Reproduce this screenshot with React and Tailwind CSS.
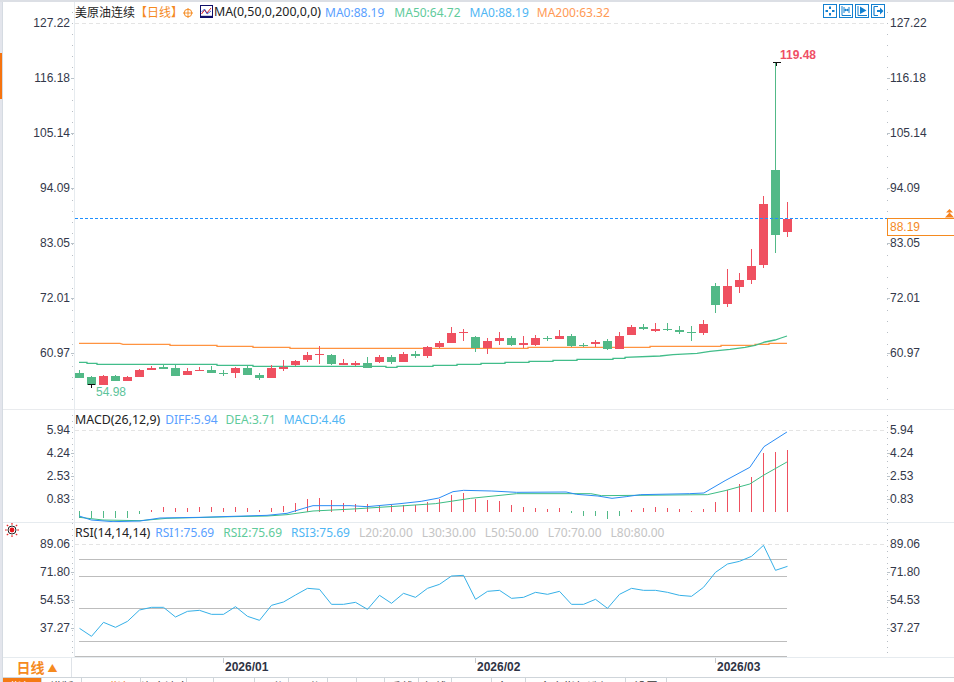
import React from "react";

const GREEN = "#52b987";
const RED = "#ef5060";
// [color, high, bodyTop, bodyBottom, low] in screen pixels, one candle every 12px
const candles = [
  ["g",370,373,378,378],["g",376,377,385,385],["r",375,376,385,385],["g",375,376,381,381],["r",376,377,381,381],
  ["r",369,370,377,377],["r",366,368,370,370],["g",364,367,369,369],["g",365,368,376,376],["r",368,371,375,375],
  ["r",367,370,371,371],["g",366,370,373,373],["g",370,373,374,376],["r",367,368,373,378],["g",366,368,375,375],
  ["g",373,375,378,380],["r",365,368,378,378],["r",360,367,369,371],["r",360,361,365,366],["r",352,355,360,362],
  ["r",346,354,355,364],["g",354,355,364,365],["r",359,363,365,365],["r",361,363,365,366],["g",357,363,368,368],
  ["r",355,357,362,363],["g",355,357,362,364],["r",352,354,362,362],["g",351,354,356,358],["r",346,347,356,358],
  ["r",341,343,347,348],["r",327,333,343,343],["r",329,332,333,341],["g",336,337,348,352],["r",338,341,348,354],
  ["r",332,338,341,345],["g",336,338,345,346],["r",336,343,345,348],["r",335,338,345,346],["g",336,338,339,341],
  ["r",330,336,339,339],["g",334,336,346,347],["g",343,345,346,347],["r",340,342,344,347],["g",339,341,349,350],
  ["r",332,336,349,349],["r",325,327,335,335],["g",324,327,329,330],["r",323,329,331,332],["g",323,329,330,331],
  ["g",326,330,332,334],["g",326,332,333,341],["r",320,324,333,335],["g",283,286,305,313],["r",269,286,304,307],
  ["r",273,280,287,293],["r",249,266,280,284],["r",196,204,265,268],["g",62,170,235,253],["r",202,219,232,237],
];
const cx = (i) => 79.5 + 12 * i;

const ma200 = "79,343.3 120,343.3 123,344.3 170,344.3 170,345.3 217,345.3 217,346.3 253,346.3 253,347.3 290,347.3 290,348.3 528,348.3 528,347.3 650,347.3 650,346.3 721,346.3 721,345.3 755,345.3 755,344.3 769,344.3 769,343.3 787,343.3";
const ma50 = "79,362.3 87,362.3 87,363.3 97,363.3 97,364.3 217,364.3 217,365.3 253,365.3 253,366.3 386,366.3 386,367.3 397,367.3 397,366.3 433,366.3 433,365.3 457,365.3 457,364.3 481,364.3 481,363.3 505,363.3 505,362.3 529,362.3 529,361.3 553,361.3 553,360.3 577,360.3 577,359.3 613,359.3 613,358.3 625,358.3 625,357.3 660,356 673,354.7 697,353.3 710,351.3 730,349.3 745,347.3 755,345.3 765,342 775,340 781,338 787,336";

// MACD histogram tops (zoom units); baseline at 305
const macdTop = [325,325,325,325,325,312,300,291,295,295,292,292,295,292,295,300,295,289,280,268,265,270,280,282,282,289,286,285,285,277,268,255,249,267,270,273,285,291,294,297,294,309,318,318,327,318,300,294,291,294,297,303,297,276,240,222,201,129,126,120];
const mx = (z) => 400 + z / 2.83;
const diff = [
  [79.3,318],[91.3,330],[113,335],[140,333],[160,324],[200,322],[233,319],[267,316],[287,310],[307,292],[313,287],[350,287],[367,290],[400,281],
  [mx(60),274],[mx(110),264],[mx(150),245],[mx(180),241],[mx(260),243],[mx(330),247],[mx(470),246],[mx(500),253],[mx(560),258],[mx(600),265],[mx(640),260],[mx(680),254],[mx(820),251],[mx(860),249],[mx(920),212],[mx(990),172],[mx(1030),110],[mx(1095),66],
];
const dea = [
  [79.3,322],[103,330],[140,332],[167,325],[233,320],[267,318],[287,314],[313,303],[353,297],[400,288],
  [mx(100),281],[mx(200),265],[mx(330),251],[mx(540),251],[mx(570),257],[mx(870),254],[mx(920),242],[mx(990),222],[mx(1030),195],[mx(1095),156],
];
const toPts = (a) => a.map(([x, z]) => `${x},${410 + z / 3}`).join(" ");

const rsi = [325,349,307,322,304,270,262,262,291,274,271,283,283,260,289,301,256,246,225,205,208,253,253,247,268,226,250,220,232,205,193,168,166,238,214,211,235,232,217,223,214,253,253,238,265,223,205,211,211,217,226,229,202,157,132,124,109,76,151,139];

const tabs = [
  { w: 39, t: "指标", c: "bg-[#f47a14] text-white" },
  { w: 40, t: "横版", c: "text-[#333333]" },
  { w: 59, t: "ETF指标", c: "text-[#f47a14]" },
  { w: 46, t: "资金流向" },
  { w: 27, t: "0%" },
  { w: 41, t: "01:00" },
  { w: 34, t: "15分" },
  { w: 39, t: "60分" },
  { w: 29, t: "周" },
  { w: 28, t: "月" },
  { w: 34, t: "季线" },
  { w: 33, t: "年线" },
  { w: 40, t: "2026" },
  { w: 34, t: "多周" },
  { w: 100, t: "多空指标选择" },
  { w: 41, t: "设置" },
];

function Ticks({ height, major, first, minor = 11.05, side }) {
  const items = [];
  for (let y = first % minor; y < height; y += minor) items.push(y);
  return (
    <svg width="3" height={height} className="block shrink-0">
      {items.map((y, i) => (
        <rect key={i} x={side === "l" ? 1 : 0} y={Math.round(y)} width="1" height="1" fill="#b9bfc6" />
      ))}
      {major.map((y, i) => (
        <rect key={i} x="0" y={y} width="3" height="1" fill="#b9c2c9" />
      ))}
    </svg>
  );
}

function SunIcon() {
  return (
    <svg width="14" height="14" viewBox="0 0 14 14" className="ml-[2px] block self-start shrink-0">
      <g stroke="#ee2222" strokeWidth="1.2">
        <path d="M7 0v1.8M7 12.2V14M0 7h1.8M12.2 7H14M1.8 1.8l1.4 1.4M10.8 10.8l1.4 1.4M1.8 12.2l1.4-1.4M10.8 3.2l1.4-1.4" />
      </g>
      <circle cx="7" cy="7" r="4" fill="none" stroke="#222" strokeWidth="1" />
      <circle cx="7" cy="7" r="2.4" fill="#e8141c" />
    </svg>
  );
}

function ToolIcon({ children }) {
  return (
    <svg width="14" height="14" viewBox="0 0 14 14" className="block shrink-0">
      <rect x="0.5" y="0.5" width="13" height="13" fill="#fff" stroke="#1480d0" />
      {children}
    </svg>
  );
}

function Legend({ children, className }) {
  return (
    <div className={`flex items-center whitespace-nowrap text-[12px] leading-none font-['Noto_Sans','Noto_Sans_CJK_SC',sans-serif] ${className}`}>
      {children}
    </div>
  );
}

export default function App() {
  return (
    <div className="flex h-[682px] w-[954px] flex-col overflow-hidden bg-white font-['Liberation_Sans','Noto_Sans_CJK_SC',sans-serif] text-[12px] text-[#33384a]">
      <div className="h-[2px] shrink-0 bg-[#dcdfe5]" />
      <div className="flex min-h-0 flex-1">
        <div className="flex w-[3px] shrink-0 flex-col border-r border-[#d5dbe2] bg-[#e3e5ec]">
          <div className="mt-[51px] h-[46px] w-[2px] bg-[#f5730f]" />
        </div>
        <div className="flex min-w-0 flex-1 flex-col">
          {/* main pane */}
          <div className="flex h-[408px] shrink-0 border-b border-[#e9ebee]">
            <div className="flex w-[71px] shrink-0">
              <div className="flex h-[407px] w-[67px] flex-col items-end gap-[41px] pt-[14px] leading-[14px]">
                {["127.22", "116.18", "105.14", "94.09", "83.05", "72.01", "60.97"].map((t) => (
                  <span key={t}>{t}</span>
                ))}
              </div>
              <div className="w-px" />
              <Ticks height={407} first={10} side="l" major={[76, 131, 186, 241, 296, 351]} />
            </div>
            <div className="flex w-[813px] shrink-0 flex-col border-l border-[#e6ebef]">
              <Legend className="h-[21px] text-[#222222]">
                <span>美原油连续</span>
                <span className="text-[#f58a1f]">【日线】</span>
                <svg width="10" height="10" viewBox="0 0 10 10" className="shrink-0">
                  <circle cx="5" cy="5" r="3.8" fill="none" stroke="#f58a1f" />
                  <path d="M0 5h10M5 0v10" stroke="#f58a1f" strokeWidth="0.9" />
                </svg>
                <svg width="13" height="13" viewBox="0 0 13 13" className="ml-[7px] mb-[3px] shrink-0">
                  <rect x="0.5" y="0.5" width="12" height="12" fill="#fff" stroke="#10106a" />
                  <path d="M1.5 9l3-4 2.5 3 4-5" fill="none" stroke="#e02020" />
                  <path d="M1.5 7l3-3 2.5 5 4-3" fill="none" stroke="#2040c0" strokeWidth="0.8" />
                  <rect x="1" y="10.8" width="11" height="1.5" fill="#10106a" />
                </svg>
                <span className="ml-[1px] text-[12.4px]">MA(0,50,0,200,0,0)</span>
                <span className="ml-[4px] text-[#5a9fff]">MA0:88.19</span>
                <span className="ml-[10px] text-[#5fcb9b]">MA50:64.72</span>
                <span className="ml-[9px] text-[#4fb6f4]">MA0:88.19</span>
                <span className="ml-[8px] text-[#ff9a55]">MA200:63.32</span>
                <div className="ml-auto mb-[3px] flex gap-[2px] pr-[2px]">
                  <ToolIcon>
                    <path d="M6 2.5h2v2.5H6zM6 9h2v2.5H6zM2.5 6H5v2H2.5zM9 6h2.5v2H9z" fill="#1480d0" />
                  </ToolIcon>
                  <ToolIcon>
                    <path d="M3 2v9.5h9M5 3v6M10 3v6M5 6h5" fill="none" stroke="#1480d0" />
                    <path d="M6 4.5L8 6 6 7.5zM9 4.5L7 6l2 1.5z" fill="#1480d0" />
                  </ToolIcon>
                  <ToolIcon>
                    <path d="M3 2v9.5h9" fill="none" stroke="#1480d0" />
                    <path d="M5 2.5L11.5 6.5 5 10z" fill="#1480d0" />
                  </ToolIcon>
                  <ToolIcon>
                    <path d="M3 2.5h4M3 11.5h4M3 2.5v9" fill="none" stroke="#1480d0" strokeWidth="1.2" />
                    <path d="M6 6h3V3.5L12.5 7 9 10.5V8H6z" fill="#1480d0" />
                  </ToolIcon>
                </div>
              </Legend>
              <svg width="812" height="386" viewBox="75 23 812 386" className="block">
                <line x1="75" y1="23.5" x2="887" y2="23.5" stroke="#e4e4e4" strokeDasharray="4 3" />
                <polyline points={ma200} fill="none" stroke="#ff9340" strokeWidth="1.3" />
                <polyline points={ma50} fill="none" stroke="#42bd8a" strokeWidth="1.3" />
                <g shapeRendering="crispEdges">
                  {candles.map(([c, hi, top, bot, lo], i) => {
                    const col = c === "g" ? GREEN : RED;
                    return (
                      <g key={i} fill={col}>
                        <rect x={cx(i) - 0.5} y={hi} width="1" height={lo - hi} />
                        <rect x={cx(i) - 4.5} y={top} width="9" height={Math.max(bot - top, 1)} />
                      </g>
                    );
                  })}
                  <path d="M772.5 62.5h8M776.5 62v4" stroke="#111" fill="none" />
                  <path d="M88 384.5h7M91.5 384v3.5" stroke="#111" fill="none" />
                </g>
                <line x1="75" y1="218.5" x2="887" y2="218.5" stroke="#1e90ff" strokeDasharray="3 2" />
                <text x="780" y="59" fill="#ef4f66" fontSize="12" fontWeight="700" fontFamily="'Liberation Sans',sans-serif">119.48</text>
                <text x="96" y="396" fill="#5cc39a" fontSize="12" fontFamily="'Liberation Sans',sans-serif">54.98</text>
              </svg>
            </div>
            <div className="relative flex min-w-0 flex-1">
              <Ticks height={407} first={10} side="r" major={[76, 131, 186, 241, 296, 351]} />
              <div className="flex h-[407px] flex-col gap-[41px] pt-[14px] leading-[14px]">
                {["127.22", "116.18", "105.14", "94.09", "83.05", "72.01", "60.97"].map((t) => (
                  <span key={t}>{t}</span>
                ))}
              </div>
              <div className="absolute left-0 right-0 top-[216px] h-[18px] border-y border-l border-[#f58a1f] bg-white pl-[2px] leading-[17px] text-[#f58a1f]">
                88.19
              </div>
              <svg width="9" height="9" viewBox="0 0 9 9" className="absolute right-0 top-[207px]">
                <path d="M4.5 0L8 3.6H1zM4.5 3.6L9 8.5H0z" fill="#f5821f" />
              </svg>
            </div>
          </div>

          {/* MACD pane */}
          <div className="flex h-[113px] shrink-0 border-b border-[#e6ebef]">
            <div className="flex w-[71px] shrink-0">
              <div className="flex w-[67px] flex-col items-end gap-[9px] pt-[13px] leading-[14px]">
                {["5.94", "4.24", "2.53", "0.83"].map((t) => (
                  <span key={t}>{t}</span>
                ))}
              </div>
              <div className="w-px" />
              <Ticks height={112} first={5} minor={5.8} side="l" major={[43, 66, 89]} />
            </div>
            <div className="flex w-[813px] shrink-0 flex-col border-l border-[#e6ebef]">
              <Legend className="h-[20px] text-[#222222]">
                <span className="text-[12.4px]">MACD(26,12,9)</span>
                <span className="ml-[5px] text-[#5a9fff]">DIFF:5.94</span>
                <span className="ml-[8px] text-[#5fcb9b]">DEA:3.71</span>
                <span className="ml-[8px] text-[#4fb6f4]">MACD:4.46</span>
              </Legend>
              <svg width="812" height="92" viewBox="75 430 812 92" className="block">
                <line x1="75" y1="430.5" x2="887" y2="430.5" stroke="#e4e4e4" strokeDasharray="4 3" />
                <g shapeRendering="crispEdges">
                  {macdTop.map((z, i) => {
                    const y = 410 + z / 3;
                    const neg = z > 305;
                    return (
                      <rect
                        key={i}
                        x={Math.floor(cx(i))}
                        y={neg ? 511 : Math.round(y)}
                        width="1"
                        height={Math.max(neg ? Math.round(y) - 511 : 512 - Math.round(y), 1)}
                        fill={neg ? GREEN : RED}
                      />
                    );
                  })}
                </g>
                <polyline points={toPts(dea)} fill="none" stroke="#3dbd85" strokeWidth="1" />
                <polyline points={toPts(diff)} fill="none" stroke="#2a8cf5" strokeWidth="1" />
              </svg>
            </div>
            <div className="flex min-w-0 flex-1">
              <Ticks height={112} first={5} minor={5.8} side="r" major={[43, 66, 89]} />
              <div className="flex flex-col gap-[9px] pt-[13px] leading-[14px]">
                {["5.94", "4.24", "2.53", "0.83"].map((t) => (
                  <span key={t}>{t}</span>
                ))}
              </div>
            </div>
          </div>

          {/* RSI pane */}
          <div className="flex h-[135px] shrink-0 border-b border-[#e6ebef]">
            <div className="flex w-[71px] shrink-0">
              <div className="flex w-[67px] flex-col items-end leading-[14px]">
                <SunIcon />
                {["89.06", "71.80", "54.53", "37.27"].map((t) => (
                  <span key={t} className="mb-[14px]">{t}</span>
                ))}
              </div>
              <div className="w-px" />
              <Ticks height={134} first={6} minor={5.6} side="l" major={[49, 77, 105]} />
            </div>
            <div className="flex w-[813px] shrink-0 flex-col border-l border-[#e6ebef]">
              <Legend className="h-[20px] text-[#222222]">
                <span className="text-[12.4px]">RSI(14,14,14)</span>
                <span className="ml-[5px] text-[#5a9fff]">RSI1:75.69</span>
                <span className="ml-[9px] text-[#5fcb9b]">RSI2:75.69</span>
                <span className="ml-[9px] text-[#4fb6f4]">RSI3:75.69</span>
                <span className="ml-[9px] text-[#c4c4c4]">L20:20.00</span>
                <span className="ml-[9px] text-[#c4c4c4]">L30:30.00</span>
                <span className="ml-[9px] text-[#c4c4c4]">L50:50.00</span>
                <span className="ml-[9px] text-[#c4c4c4]">L70:70.00</span>
                <span className="ml-[9px] text-[#c4c4c4]">L80:80.00</span>
              </Legend>
              <svg width="812" height="114" viewBox="75 543 812 114" className="block">
                <line x1="75" y1="544.5" x2="887" y2="544.5" stroke="#e4e4e4" strokeDasharray="4 3" />
                <g stroke="#bdbdbd" shapeRendering="crispEdges">
                  <line x1="79" y1="559.5" x2="787" y2="559.5" />
                  <line x1="79" y1="576.5" x2="787" y2="576.5" />
                  <line x1="79" y1="608.5" x2="787" y2="608.5" />
                  <line x1="79" y1="641.5" x2="787" y2="641.5" />
                  <line x1="75" y1="656.5" x2="787" y2="656.5" />
                </g>
                <polyline
                  points={rsi.map((z, i) => `${cx(i)},${520 + z / 3}`).join(" ")}
                  fill="none"
                  stroke="#35b0e8"
                  strokeWidth="1"
                />
              </svg>
            </div>
            <div className="flex min-w-0 flex-1">
              <Ticks height={134} first={6} minor={5.6} side="r" major={[49, 77, 105]} />
              <div className="flex flex-col leading-[14px]">
                <div className="h-[14px]" />
                {["89.06", "71.80", "54.53", "37.27"].map((t) => (
                  <span key={t} className="mb-[14px]">{t}</span>
                ))}
              </div>
            </div>
          </div>

          {/* date axis */}
          <div className="flex h-[19px] shrink-0">
            <div className="flex w-[69px] shrink-0 items-center justify-center gap-[3px] border-r border-[#dfe3e8] font-['Noto_Sans_CJK_SC',sans-serif] text-[14px] font-bold text-[#f58a1f]">
              <span>日线</span>
              <span className="text-[10px]">▲</span>
            </div>
            <div className="flex min-w-0 flex-1 pl-[151px] text-[12px] font-bold text-[#2e3344]">
              <div className="flex w-[252px] shrink-0">
                <span className="mr-[1px] h-[5px] w-px bg-[#c4c8cc]" />
                <span className="leading-[19px]">2026/01</span>
              </div>
              <div className="flex w-[240px] shrink-0">
                <span className="mr-[1px] h-[5px] w-px bg-[#c4c8cc]" />
                <span className="leading-[19px]">2026/02</span>
              </div>
              <div className="flex shrink-0">
                <span className="mr-[1px] h-[5px] w-px bg-[#c4c8cc]" />
                <span className="leading-[19px]">2026/03</span>
              </div>
            </div>
          </div>

          {/* tabs, cut by the window edge */}
          <div className="flex h-[5px] shrink-0 overflow-hidden border-t border-[#cfd5da] font-['Noto_Sans_CJK_SC',sans-serif] text-[12px] leading-[16px] text-[#333333]">
            {tabs.map((t, i) => (
              <div
                key={i}
                style={{ width: t.w }}
                className={`shrink-0 border-r border-[#cfd5da] pt-[1px] text-center whitespace-nowrap ${t.c ?? ""}`}
              >
                {t.t}
              </div>
            ))}
          </div>
        </div>
      </div>
    </div>
  );
}
